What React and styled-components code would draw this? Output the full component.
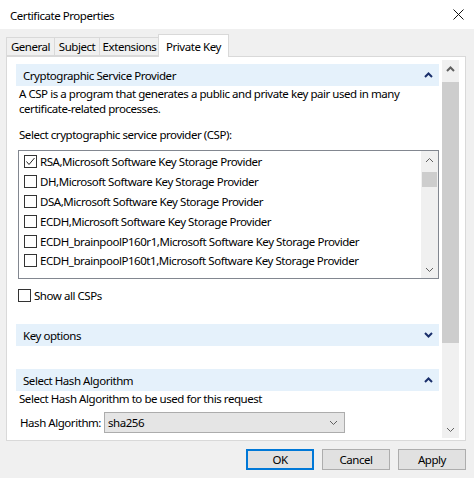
import React from 'react';
import styled, { createGlobalStyle } from 'styled-components';

const GlobalStyle = createGlobalStyle`
  html, body {
    margin: 0;
    padding: 0;
    background: #f0f0f0;
  }
  body {
    font-family: "Noto Sans", "Open Sans", sans-serif;
    font-size: 11.5px;
    letter-spacing: -0.45px;
    color: #000;
  }
`;

const Window = styled.div`
  width: 474px;
  height: 478px;
  background: #f0f0f0;
  display: flex;
  flex-direction: column;
  overflow: hidden;
`;

const TitleBar = styled.div`
  height: 29px;
  background: #fff;
  display: flex;
  align-items: center;
  justify-content: space-between;
  padding: 0 10px 0 10px;
  box-sizing: border-box;
`;

const Title = styled.span`
  font-size: 11.5px;
  padding-top: 1px;
`;

const Body = styled.div`
  padding: 5px 8px 0 6px;
`;

const TabStrip = styled.div`
  display: flex;
  align-items: flex-end;
  height: 22px;
  position: relative;
  z-index: 1;
`;

const Tab = styled.div`
  width: ${p => p.w}px;
  height: ${p => (p.active ? '23px' : '19px')};
  margin: ${p => (p.active ? '0 -2px -1px -2px' : '0')};
  box-sizing: border-box;
  background: ${p => (p.active ? '#fff' : '#f0f0f0')};
  border: 1px solid #d9d9d9;
  border-bottom: ${p => (p.active ? 'none' : '1px solid #d9d9d9')};
  border-left: ${p => (p.first || p.active ? '1px solid #d9d9d9' : 'none')};
  display: flex;
  align-items: center;
  justify-content: center;
  white-space: nowrap;
  position: relative;
`;

const TabPanel = styled.div`
  height: 385px;
  background: #fff;
  border: 1px solid #d9d9d9;
  box-sizing: border-box;
  display: flex;
  padding: 3px 6px 2px 3px;
`;

const ScrollContent = styled.div`
  flex: 1;
  padding: 4px 3px 0 6px;
  overflow: hidden;
`;

const Scrollbar = styled.div`
  width: 17px;
  background: #f0f0f0;
  display: flex;
  flex-direction: column;
  flex-shrink: 0;
`;

const ArrowBox = styled.div`
  height: 17px;
  display: flex;
  align-items: center;
  justify-content: center;
`;

const Track = styled.div`
  flex: 1;
  display: flex;
  flex-direction: column;
  padding: ${p => p.pad};
`;

const Thumb = styled.div`
  height: ${p => p.h}px;
  margin: 0 ${p => p.side}px;
  background: #cdcdcd;
`;

const SectionHeader = styled.div`
  height: 22px;
  background: #e5f1fb;
  display: flex;
  align-items: center;
  justify-content: space-between;
  padding: 0 6px 0 7px;
  margin-top: ${p => p.mt || 0}px;
`;

const Para = styled.div`
  line-height: 15px;
  padding-left: 3px;
  margin-top: ${p => p.mt || 0}px;
`;

const ListBox = styled.div`
  margin-top: 8px;
  margin-left: 2px;
  height: 129px;
  border: 1px solid #828790;
  box-sizing: border-box;
  display: flex;
`;

const ListItems = styled.div`
  flex: 1;
  padding: 1px 0 0 5px;
  overflow: hidden;
`;

const ListItem = styled.div`
  height: 19.8px;
  display: flex;
  align-items: center;
  gap: 3px;
  white-space: nowrap;
`;

const CheckRow = styled.div`
  display: flex;
  align-items: center;
  gap: 3px;
  margin-top: 9px;
  margin-left: 2px;
`;

const Box = styled.span`
  width: 13px;
  height: 13px;
  box-sizing: border-box;
  border: 1px solid #333;
  background: #fff;
  display: inline-flex;
  align-items: center;
  justify-content: center;
  flex-shrink: 0;
`;

const HashRow = styled.div`
  display: flex;
  align-items: center;
  margin-top: 6px;
  padding-left: 4px;
  gap: 3px;
`;

const Select = styled.div`
  width: 241px;
  height: 21px;
  box-sizing: border-box;
  background: #e5e5e5;
  border: 1px solid #acacac;
  display: flex;
  align-items: center;
  justify-content: space-between;
  padding: 0 6px 0 3px;
`;

const ButtonRow = styled.div`
  display: flex;
  justify-content: flex-end;
  gap: 8px;
  padding: 8px 8px 0 0;
`;

const Button = styled.button`
  width: 68px;
  height: 21px;
  box-sizing: border-box;
  background: #e1e1e1;
  border: ${p => (p.primary ? '2px solid #0078d7' : '1px solid #adadad')};
  font-family: inherit;
  font-size: 11.5px;
  letter-spacing: -0.45px;
  color: #000;
  padding: 0;
`;

const Chevron = ({ up, color = '#1a2f6b', bold = true }) => (
  <svg width="9" height="6" viewBox="0 0 9 6">
    <polyline
      points={up ? '1,5 4.5,1.5 8,5' : '1,1 4.5,4.5 8,1'}
      fill="none"
      stroke={color}
      strokeWidth={bold ? 2 : 1}
    />
  </svg>
);

const CheckBox = ({ checked }) => (
  <Box>
    {checked && (
      <svg width="11" height="11" viewBox="0 0 11 11">
        <polyline points="1.5,5.5 4,8.5 9.5,2" fill="none" stroke="#222" strokeWidth="1" />
      </svg>
    )}
  </Box>
);

const providers = [
  'RSA,Microsoft Software Key Storage Provider',
  'DH,Microsoft Software Key Storage Provider',
  'DSA,Microsoft Software Key Storage Provider',
  'ECDH,Microsoft Software Key Storage Provider',
  'ECDH_brainpoolP160r1,Microsoft Software Key Storage Provider',
  'ECDH_brainpoolP160t1,Microsoft Software Key Storage Provider',
];

const App = () => {
  return (
    <Window>
      <GlobalStyle />
      <TitleBar>
        <Title>Certificate Properties</Title>
        <svg width="11" height="11" viewBox="0 0 11 11">
          <path d="M0.5 0.5 L10.5 10.5 M10.5 0.5 L0.5 10.5" stroke="#111" strokeWidth="1" />
        </svg>
      </TitleBar>
      <Body>
        <TabStrip>
          <Tab first w={49}>General</Tab>
          <Tab w={45}>Subject</Tab>
          <Tab w={60}>Extensions</Tab>
          <Tab active w={71}>Private Key</Tab>
        </TabStrip>
        <TabPanel>
          <ScrollContent>
            <SectionHeader>
              <span>Cryptographic Service Provider</span>
              <Chevron up />
            </SectionHeader>
            <Para>
              A CSP is a program that generates a public and private key pair used in many
              <br />
              certificate-related processes.
            </Para>
            <Para mt={11}>Select cryptographic service provider (CSP):</Para>
            <ListBox>
              <ListItems>
                {providers.map((p, i) => (
                  <ListItem key={p}>
                    <CheckBox checked={i === 0} />
                    {p}
                  </ListItem>
                ))}
              </ListItems>
              <Scrollbar>
                <ArrowBox><Chevron up color="#606060" bold={false} /></ArrowBox>
                <Track pad="4px 0 0 0">
                  <Thumb h={15} side={1} />
                </Track>
                <ArrowBox><Chevron color="#606060" bold={false} /></ArrowBox>
              </Scrollbar>
            </ListBox>
            <CheckRow>
              <CheckBox />
              Show all CSPs
            </CheckRow>
            <SectionHeader mt={21}>
              <span>Key options</span>
              <Chevron />
            </SectionHeader>
            <SectionHeader mt={23}>
              <span>Select Hash Algorithm</span>
              <Chevron up />
            </SectionHeader>
            <Para>Select Hash Algorithm to be used for this request</Para>
            <HashRow>
              <span>Hash Algorithm:</span>
              <Select>
                <span>sha256</span>
                <Chevron color="#606060" bold={false} />
              </Select>
            </HashRow>
          </ScrollContent>
          <Scrollbar>
            <ArrowBox><Chevron up color="#606060" /></ArrowBox>
            <Track pad="5px 0 0 0">
              <Thumb h={261} side={0} />
            </Track>
            <ArrowBox><Chevron color="#606060" bold={false} /></ArrowBox>
          </Scrollbar>
        </TabPanel>
      </Body>
      <ButtonRow>
        <Button primary>OK</Button>
        <Button>Cancel</Button>
        <Button>Apply</Button>
      </ButtonRow>
    </Window>
  );
};

export default App;
